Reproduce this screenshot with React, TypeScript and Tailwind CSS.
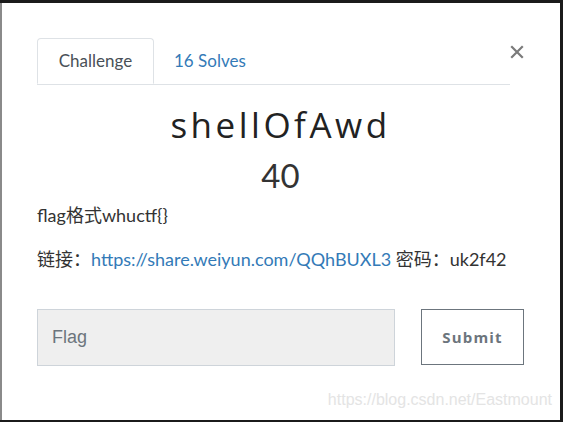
import React from "react";

export default function App() {
  return (
    <div className="w-[563px] h-[422px] bg-[#1b1b1b] pt-[3px] pr-[3px] pb-[2px] overflow-hidden">
      <div className="relative h-full bg-white border-l-2 border-[#8a8a8a] pl-[35px] pr-[36px] pt-[35px] font-['Lato','Noto_Sans_CJK_SC',sans-serif] text-[#333]">
        {/* tabs */}
        <div className="flex w-[473px] border-b border-[#dee2e6]">
          <div className="h-[46px] w-[117px] border border-[#dee2e6] border-b-white -mb-px rounded-t-[4px] flex items-center justify-center text-[17px] text-[#495057]">
            Challenge
          </div>
          <div className="h-[46px] px-[20px] flex items-center text-[17px] text-[#337ab7]">
            16 Solves
          </div>
        </div>
        <button className="absolute left-[508px] top-[42px] w-[14px] h-[14px]">
          <svg width="14" height="14" viewBox="0 0 14 14">
            <path d="M2 2 L12 12 M12 2 L2 12" stroke="#7a7a7a" strokeWidth="2.2" strokeLinecap="square" />
          </svg>
        </button>
        {/* title */}
        <div className="text-center text-[35px] leading-[42px] mt-[19px] font-normal tracking-[0.1em] text-[#222] font-['Open_Sans',sans-serif]">
          shellOfAwd
        </div>
        <div className="text-center text-[33px] leading-[40px] mt-[9px] font-normal text-[#333]">
          40
        </div>
        <div className="mt-[8px] text-[18px] leading-[24px]">flag格式whuctf{"{}"}</div>
        <div className="mt-[20px] text-[18px] leading-[24px]">
          链接：<span className="text-[#337ab7]">https://share.weiyun.com/QQhBUXL3</span> 密码：uk2f42
        </div>
        {/* form */}
        <div className="flex mt-[38px] items-start">
          <div className="w-[358px] h-[57px] bg-[#efefef] border border-[#ced4da] flex items-center pl-[14px] text-[18px] text-[#6c757d] font-['Liberation_Sans',sans-serif]">
            Flag
          </div>
          <div className="ml-[26px] w-[103px] h-[56px] border border-[#6c757d] flex items-center justify-center text-[15px] font-bold tracking-[0.08em] text-[#6c757d] font-['Open_Sans',sans-serif]">
            Submit
          </div>
        </div>
        <div className="absolute right-[8px] bottom-[8px] font-['Liberation_Sans',sans-serif] text-[16px] text-[#e4e4e4]">
          https://blog.csdn.net/Eastmount
        </div>
      </div>
    </div>
  );
}
